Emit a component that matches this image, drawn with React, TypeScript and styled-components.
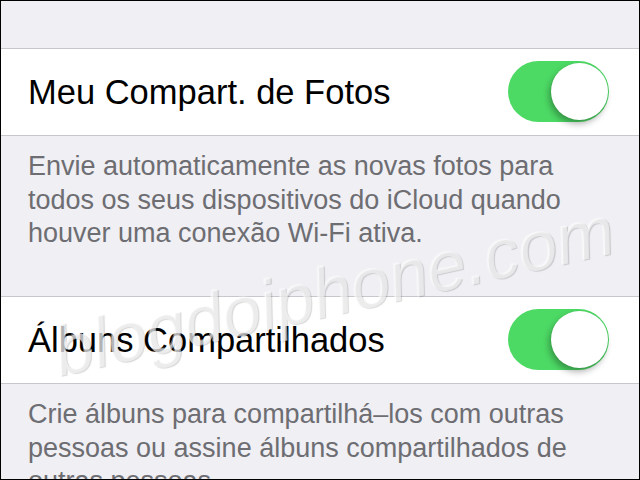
import styled, { createGlobalStyle } from "styled-components";

const GlobalStyle = createGlobalStyle`
  html, body {
    margin: 0;
    padding: 0;
    background: #000;
  }
  * {
    box-sizing: border-box;
  }
`;

const Screen = styled.div`
  position: relative;
  width: 640px;
  height: 480px;
  overflow: hidden;
  border: 1px solid #000;
  background: #efeff4;
  font-family: "Liberation Sans", Arial, sans-serif;
`;

const TopGap = styled.div`
  height: 47px;
`;

const Row = styled.div`
  display: flex;
  align-items: center;
  justify-content: space-between;
  height: 88px;
  padding: 0 30px 0 27px;
  background: #fff;
  border-top: 1px solid #c8c7cc;
  border-bottom: 1px solid #c8c7cc;
`;

const RowLabel = styled.span`
  font-size: 34.5px;
  color: #000;
`;

const Footer = styled.p`
  margin: 0;
  height: 160px;
  padding: 14px 40px 0 27px;
  font-size: 27px;
  line-height: 33.5px;
  color: #6d6d72;
`;

const Toggle = styled.div<{ on?: boolean }>`
  position: relative;
  width: 101px;
  height: 61px;
  margin-top: -2px;
  border-radius: 31px;
  background: ${({ on }) => (on ? "#4cd964" : "#e5e5ea")};
`;

const Knob = styled.span<{ on?: boolean }>`
  position: absolute;
  top: 2px;
  left: ${({ on }) => (on ? "43px" : "2px")};
  width: 57px;
  height: 57px;
  border-radius: 50%;
  background: #fff;
  box-shadow: -2px 4px 6px rgba(0, 0, 0, 0.3), 0 0 0 0.5px rgba(0, 0, 0, 0.06);
`;

const Watermark = styled.div`
  position: absolute;
  left: 60px;
  top: 320px;
  font-size: 70px;
  line-height: 62px;
  font-style: italic;
  white-space: nowrap;
  color: rgba(255, 255, 255, 0.55);
  text-shadow: 1px 1px 1px rgba(0, 0, 0, 0.16), -1px -1px 0 rgba(255, 255, 255, 0.4);
  transform-origin: 0 100%;
  transform: rotate(-12.5deg);
  pointer-events: none;
`;

const settings = [
  {
    label: "Meu Compart. de Fotos",
    on: true,
    note: (
      <>
        Envie automaticamente as novas fotos para
        <br />
        todos os seus dispositivos do iCloud quando
        <br />
        houver uma conexão Wi-Fi ativa.
      </>
    ),
  },
  {
    label: "Álbuns Compartilhados",
    on: true,
    note: (
      <>
        Crie álbuns para compartilhá–los com outras
        <br />
        pessoas ou assine álbuns compartilhados de
        <br />
        outras pessoas.
      </>
    ),
  },
];

const App = () => {
  return (
    <>
      <GlobalStyle />
      <Screen>
        <TopGap />
        {settings.map((item) => (
          <div key={item.label}>
            <Row>
              <RowLabel>{item.label}</RowLabel>
              <Toggle on={item.on}>
                <Knob on={item.on} />
              </Toggle>
            </Row>
            <Footer>{item.note}</Footer>
          </div>
        ))}
        <Watermark>blogdoiphone.com</Watermark>
      </Screen>
    </>
  );
};

export default App;
